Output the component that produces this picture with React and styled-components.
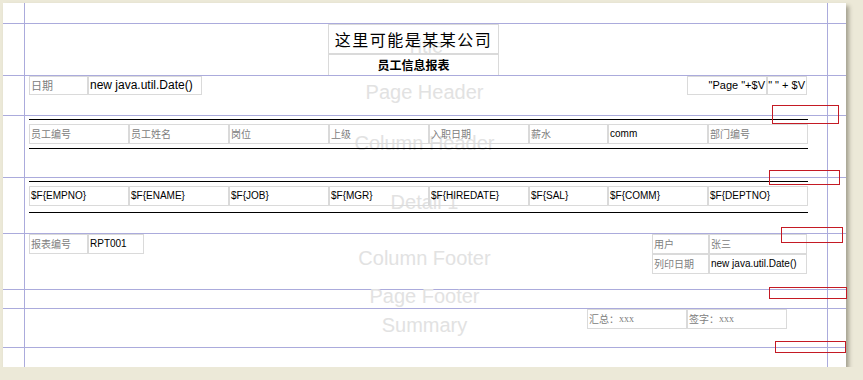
import React from 'react';
import styled, {createGlobalStyle} from 'styled-components';

const GlobalStyle = createGlobalStyle`
  html, body {
    margin: 0;
    padding: 0;
    background: #ece9d8;
    overflow: hidden;
  }
`

const Page = styled.div`
  position: relative;
  margin: 3px 0 0 3px;
  width: 843px;
  height: 364px;
  background: #fff;
  box-shadow: 3px 3px 4px rgba(80, 75, 60, 0.45);
  font-family: "Liberation Sans", Arial, sans-serif;
`

const Margin = styled.div`
  height: 20px;
  box-sizing: border-box;
  border-top: ${p => p.$line ? '1px solid #ababdc' : 'none'};
`

const Band = styled.div`
  position: relative;
  box-sizing: border-box;
  height: ${p => p.$h}px;
  border-top: 1px solid #ababdc;
  display: flex;
  align-items: center;
  justify-content: center;
`

const BandLabel = styled.span`
  font-family: "Liberation Sans", Arial, sans-serif;
  font-size: 20px;
  color: #e2e2e2;
  transform: translateY(-3px);
  white-space: nowrap;
`

const Guide = styled.div`
  position: absolute;
  top: 0;
  bottom: 0;
  left: ${p => p.$x}px;
  width: 1px;
  background: #ababdc;
`

const Marker = styled.div`
  position: absolute;
  box-sizing: border-box;
  border: 1px solid #c41a24;
`

// report elements sit where the designer dropped them
const Row = styled.div`
  position: absolute;
  left: ${p => p.$x}px;
  top: ${p => p.$y}px;
  display: flex;
`

const Stack = styled.div`
  position: absolute;
  left: ${p => p.$x}px;
  top: ${p => p.$y}px;
  display: flex;
  flex-direction: column;
`

const Line = styled.div`
  display: flex;
`

const Rule = styled.div`
  position: absolute;
  left: 26px;
  top: ${p => p.$y}px;
  width: 779px;
  height: 1px;
  background: #000;
`

const Cell = styled.div`
  box-sizing: border-box;
  width: ${p => p.$w}px;
  height: ${p => p.$h || 20}px;
  border: 1px solid #dadada;
  display: flex;
  align-items: center;
  justify-content: ${p => p.$align === 'right' ? 'flex-end' : p.$align === 'center' ? 'center' : 'flex-start'};
  padding: 0 1px 1px;
  white-space: nowrap;
  font-family: ${p => p.$cn ? '"Noto Sans CJK SC", sans-serif' : '"Liberation Sans", Arial, sans-serif'};
  font-size: ${p => p.$size || 10}px;
  font-weight: ${p => p.$bold ? 'bold' : 'normal'};
  letter-spacing: ${p => p.$spacing || 0}px;
  color: ${p => p.$cn && !p.$dark ? '#808080' : '#000'};
`

const Xs = styled.span`
  font-family: "Liberation Serif", serif;
  font-size: 10px;
`

const headers = ['员工编号', '员工姓名', '岗位', '上级', '入职日期', '薪水', 'comm', '部门编号']
const fields = ['$F{EMPNO}', '$F{ENAME}', '$F{JOB}', '$F{MGR}', '$F{HIREDATE}', '$F{SAL}', '$F{COMM}', '$F{DEPTNO}']
const widths = [100, 100, 100, 100, 100, 79, 100, 100]

const isCn = s => /[\u4e00-\u9fff]/.test(s)

const markers = [
    {x: 769, y: 102, w: 67, h: 19},
    {x: 766, y: 167, w: 71, h: 15},
    {x: 778, y: 224, w: 62, h: 16},
    {x: 766, y: 284, w: 78, h: 12},
    {x: 772, y: 338, w: 71, h: 12},
]

const App = () => {
    return (
        <>
            <GlobalStyle/>
            <Page>
                <Margin/>

                <Band $h={52}>
                    <BandLabel>Title</BandLabel>
                    <Stack $x={325} $y={0}>
                        <Cell $w={171} $h={30} $cn $dark $size={16} $spacing={1.5} $align="center">这里可能是某某公司</Cell>
                        <Cell $w={171} $h={22} $cn $dark $bold $size={12} $align="center">员工信息报表</Cell>
                    </Stack>
                </Band>

                <Band $h={40}>
                    <BandLabel>Page Header</BandLabel>
                    <Row $x={26} $y={0}>
                        <Cell $w={59} $h={19} $cn $size={11}>日期</Cell>
                        <Cell $w={114} $h={19} $size={12}>new java.util.Date()</Cell>
                    </Row>
                    <Row $x={684} $y={0}>
                        <Cell $w={80} $h={19} $size={11} $align="right">"Page "+$V</Cell>
                        <Cell $w={40} $h={19} $size={11} $align="right">" " + $V</Cell>
                    </Row>
                </Band>

                <Band $h={62}>
                    <BandLabel>Column Header</BandLabel>
                    <Rule $y={3}/>
                    <Row $x={26} $y={8}>
                        {headers.map((h, i) => (
                            <Cell key={i} $w={widths[i]} $cn={isCn(h)}>{h}</Cell>
                        ))}
                    </Row>
                    <Rule $y={32}/>
                </Band>

                <Band $h={56}>
                    <BandLabel>Detail 1</BandLabel>
                    <Rule $y={3}/>
                    <Row $x={26} $y={8}>
                        {fields.map((f, i) => (
                            <Cell key={i} $w={widths[i]}>{f}</Cell>
                        ))}
                    </Row>
                    <Rule $y={34}/>
                </Band>

                <Band $h={56}>
                    <BandLabel>Column Footer</BandLabel>
                    <Row $x={26} $y={0}>
                        <Cell $w={59} $cn>报表编号</Cell>
                        <Cell $w={56}>RPT001</Cell>
                    </Row>
                    <Stack $x={649} $y={0}>
                        <Line>
                            <Cell $w={57} $cn>用户</Cell>
                            <Cell $w={98} $cn>张三</Cell>
                        </Line>
                        <Line>
                            <Cell $w={57} $cn>列印日期</Cell>
                            <Cell $w={98}>new java.util.Date()</Cell>
                        </Line>
                    </Stack>
                </Band>

                <Band $h={19}>
                    <BandLabel>Page Footer</BandLabel>
                </Band>

                <Band $h={39}>
                    <BandLabel>Summary</BandLabel>
                    <Row $x={584} $y={0}>
                        <Cell $w={100} $cn>汇总：<Xs>xxx</Xs></Cell>
                        <Cell $w={100} $cn>签字：<Xs>xxx</Xs></Cell>
                    </Row>
                </Band>

                <Margin $line/>

                <Guide $x={21}/>
                <Guide $x={824}/>
                {markers.map((m, i) => (
                    <Marker key={i} style={{left: m.x, top: m.y, width: m.w, height: m.h}}/>
                ))}
            </Page>
        </>
    )
};

export default App;
